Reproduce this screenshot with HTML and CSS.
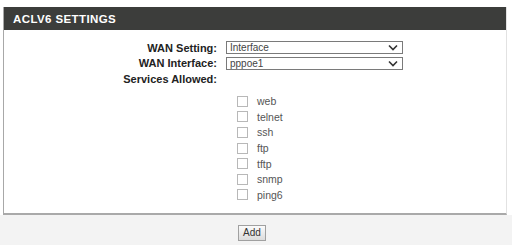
FILE: index.html
```html
<!DOCTYPE html>
<html lang="en">
<head>
  <meta charset="UTF-8">
  <title>ACLv6 Settings</title>
  <link rel="stylesheet" href="styles.css">
</head>
<body>
  <section class="panel">
    <h2 class="panel-head">ACLV6 SETTINGS</h2>
    <div class="panel-body">
      <div class="form-row">
        <label class="form-label" for="wanSetting">WAN Setting:</label>
        <div class="select-box" id="wanSetting">
          <span>Interface</span>
          <svg class="chev" width="10" height="7" viewBox="0 0 10 7"><path d="M1 1.5 L5 5.5 L9 1.5" fill="none" stroke="#333" stroke-width="1.6"/></svg>
        </div>
      </div>
      <div class="form-row">
        <label class="form-label" for="wanIface">WAN Interface:</label>
        <div class="select-box" id="wanIface">
          <span>pppoe1</span>
          <svg class="chev" width="10" height="7" viewBox="0 0 10 7"><path d="M1 1.5 L5 5.5 L9 1.5" fill="none" stroke="#333" stroke-width="1.6"/></svg>
        </div>
      </div>
      <div class="form-row">
        <span class="form-label">Services Allowed:</span>
      </div>
      <ul class="services">
        <li><input type="checkbox"> web</li>
        <li><input type="checkbox"> telnet</li>
        <li><input type="checkbox"> ssh</li>
        <li><input type="checkbox"> ftp</li>
        <li><input type="checkbox"> tftp</li>
        <li><input type="checkbox"> snmp</li>
        <li><input type="checkbox"> ping6</li>
      </ul>
    </div>
  </section>
  <div class="actions">
    <button type="button" class="btn">Add</button>
  </div>
</body>
</html>
```

FILE: styles.css
```css
body {
  margin: 0;
  background: #fff;
  font-family: "Liberation Sans", Arial, sans-serif;
  color: #333;
}

.panel {
  margin: 7px 5px 0 3px;
  border-left: 1px solid #a8a8a8;
  border-right: 1px solid #e2e2e2;
  border-bottom: 2px solid #a9a9a9;
}

.panel-head {
  margin: 0;
  height: 23px;
  line-height: 24px;
  padding-left: 9px;
  background: #3c3d3b;
  color: #fff;
  font-size: 11.5px;
  font-weight: bold;
  letter-spacing: 0.4px;
}

.panel-body {
  padding: 10px 0 10px 0;
}

.form-row {
  display: flex;
  align-items: center;
  height: 15.5px;
}

.form-label {
  width: 213px;
  text-align: right;
  font-size: 11px;
  font-weight: bold;
  color: #222;
  padding-right: 9px;
}

.select-box {
  width: 168px;
  height: 11px;
  border: 1px solid #7a7a7a;
  background: #fff;
  display: flex;
  align-items: center;
  justify-content: space-between;
  padding: 0 4px 0 3px;
  font-size: 10px;
  color: #444;
}

.select-box span {
  line-height: 11px;
}

.chev {
  display: block;
}

.services {
  list-style: none;
  margin: 7px 0 0 233px;
  padding: 0;
}

.services li {
  display: flex;
  align-items: center;
  height: 15.6px;
  font-size: 10.5px;
  color: #555;
}

.services input {
  appearance: none;
  -webkit-appearance: none;
  width: 11px;
  height: 11px;
  margin: 0 9px 0 0;
  border: 1px solid #b8b8b8;
  background: #fff;
}

.actions {
  background: #f3f3f3;
  height: 32px;
  padding: 10px 0 0 238px;
  box-sizing: border-box;
}

.btn {
  display: block;
  font-family: "Liberation Sans", Arial, sans-serif;
  font-size: 10px;
  color: #333;
  height: 16px;
  padding: 0 4px;
  border: 1px solid #a0a0a0;
  background: linear-gradient(#fbfbfb, #dcdcdc);
}
```
